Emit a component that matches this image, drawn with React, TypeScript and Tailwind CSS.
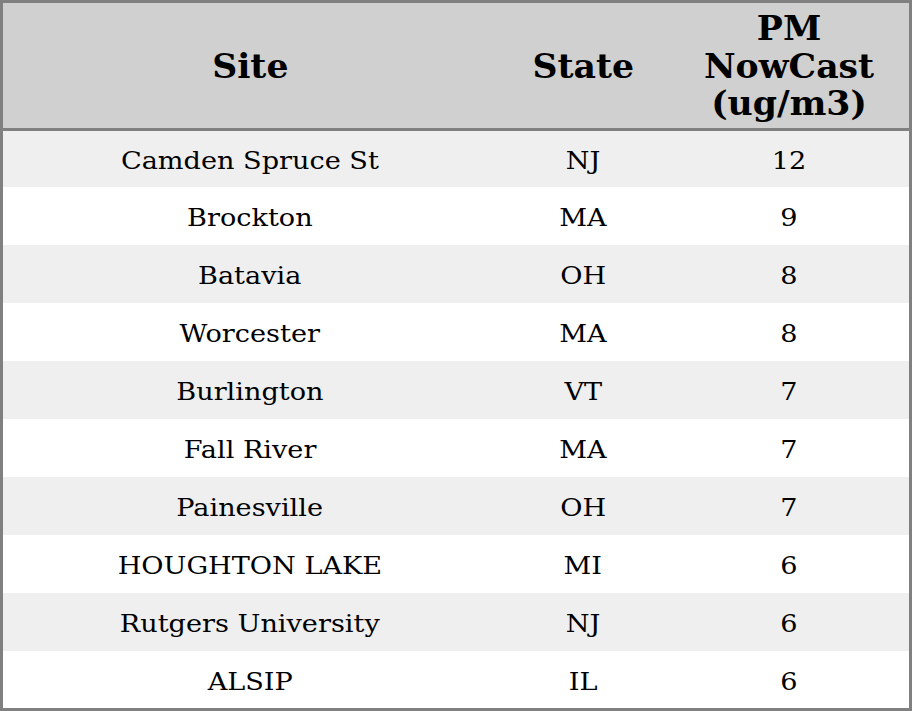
import React from "react";

const rows: [string, string, string][] = [
  ["Camden Spruce St", "NJ", "12"],
  ["Brockton", "MA", "9"],
  ["Batavia", "OH", "8"],
  ["Worcester", "MA", "8"],
  ["Burlington", "VT", "7"],
  ["Fall River", "MA", "7"],
  ["Painesville", "OH", "7"],
  ["HOUGHTON LAKE", "MI", "6"],
  ["Rutgers University", "NJ", "6"],
  ["ALSIP", "IL", "6"],
];

function Cell({ children }: { children: React.ReactNode }) {
  return (
    <div className="flex items-center justify-center pt-[3px]">
      <span className="inline-block scale-x-[1.085] whitespace-nowrap">{children}</span>
    </div>
  );
}

function Head({ children }: { children: React.ReactNode }) {
  return (
    <div className="flex items-center justify-center text-center pt-[2px]">
      <span className="inline-block scale-x-[1.05] whitespace-nowrap">{children}</span>
    </div>
  );
}

export default function App() {
  return (
    <div
      className="w-[912px] h-[711px] bg-white text-black"
      style={{ fontFamily: '"DejaVu Serif", serif' }}
    >
      <div className="border-[3px] border-[#808080] h-full flex flex-col">
        <div className="grid grid-cols-[494px_172px_240px] h-[125px] shrink-0 bg-[#d0d0d0] border-b-[3px] border-[#808080] font-bold text-[33px] leading-[37.5px] box-content">
          <Head>Site</Head>
          <Head>State</Head>
          <Head>
            PM
            <br />
            NowCast
            <br />
            (ug/m3)
          </Head>
        </div>
        <div className="flex-1 flex flex-col">
          {rows.map((r, i) => (
            <div
              key={i}
              className={
                "grid grid-cols-[494px_172px_240px] text-[25px] leading-[29px] " +
                (i === 0 ? "h-[56px] " : i === rows.length - 1 ? "flex-1 " : "h-[58px] ") +
                (i % 2 === 0 ? "bg-[#efefef]" : "bg-white")
              }
            >
              <Cell>{r[0]}</Cell>
              <Cell>{r[1]}</Cell>
              <Cell>{r[2]}</Cell>
            </div>
          ))}
        </div>
      </div>
    </div>
  );
}
